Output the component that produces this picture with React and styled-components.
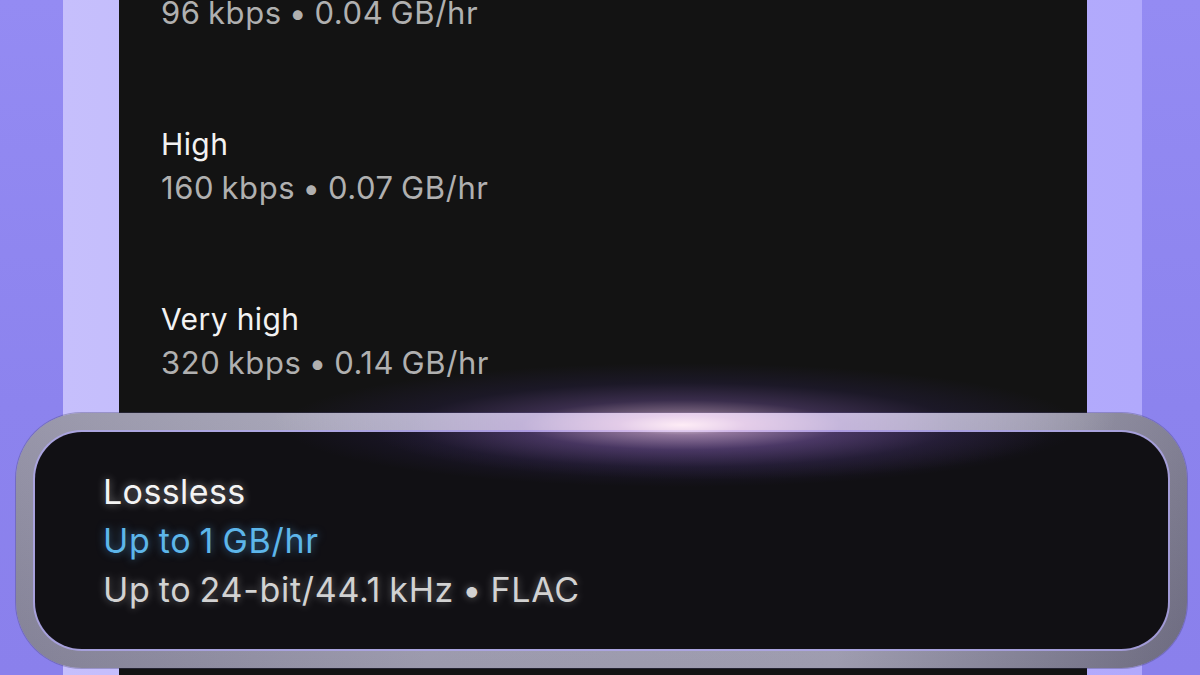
import React from "react";
import styled, { createGlobalStyle } from "styled-components";

// first tier is scrolled past; only its detail line peeks in at the top
const tiers = [
  { name: "Normal", detail: "96 kbps • 0.04 GB/hr", hidden: true },
  { name: "High", detail: "160 kbps • 0.07 GB/hr" },
  { name: "Very high", detail: "320 kbps • 0.14 GB/hr" },
];

export default function App() {
  return (
    <Page>
      <GlobalStyle />
      <Frame>
        <Screen>
          <List>
            {tiers.map((t) => (
              <Item key={t.name}>
                {t.hidden ? <Spacer /> : <Title>{t.name}</Title>}
                <Detail>{t.detail}</Detail>
              </Item>
            ))}
          </List>
          <Card>
            <Glow />
            <CardInner>
              <CardTitle>Lossless</CardTitle>
              <CardLine $accent>Up to 1 GB/hr</CardLine>
              <CardLine>Up to 24-bit/44.1 kHz • FLAC</CardLine>
            </CardInner>
          </Card>
        </Screen>
      </Frame>
    </Page>
  );
}

const GlobalStyle = createGlobalStyle`
  html, body {
    margin: 0;
    padding: 0;
    background: #8d84ef;
  }
  * {
    box-sizing: border-box;
  }
`;

const Page = styled.div`
  width: 1200px;
  height: 675px;
  overflow: hidden;
  padding: 0 58px 0 63px;
  background: linear-gradient(180deg, #948bf3 0%, #8c83ee 60%, #8a80ec 100%);
  font-family: Inter, "Open Sans", sans-serif;
`;

const Frame = styled.div`
  height: 100%;
  padding: 0 55px 0 56px;
  background: linear-gradient(90deg, #c6bffc 0%, #b9b1fc 50%, #b1a9fc 100%);
`;

const Screen = styled.div`
  height: 100%;
  background: #131313;
  display: flex;
  flex-direction: column;
`;

const List = styled.div`
  margin-top: -52px;
  padding-left: 42px;
  display: flex;
  flex-direction: column;
  gap: 89px;
`;

const Item = styled.div`
  display: flex;
  flex-direction: column;
`;

const Spacer = styled.div`
  height: 43px;
`;

const Title = styled.div`
  font-size: 30px;
  line-height: 43px;
  color: #f2f2f2;
  letter-spacing: 0.4px;
`;

const Detail = styled.div`
  font-size: 31px;
  line-height: 43px;
  color: #b0b0b0;
  letter-spacing: 0.6px;
  word-spacing: -2px;
`;

const Card = styled.div`
  position: relative;
  margin: 29px -100px 0 -103px;
  height: 255px;
  padding: 19px;
  border-radius: 66px;
  background:
    radial-gradient(ellipse 36% 45% at 58% 0%, rgba(255, 252, 255, 0.95), rgba(255, 255, 255, 0) 100%),
    linear-gradient(180deg, rgba(255, 255, 255, 0.12), rgba(0, 0, 0, 0.05)),
    linear-gradient(90deg, #8a889e 0%, #a4a2b6 35%, #a6a4b8 70%, #727086 100%);
  box-shadow: 0 0 0 1px rgba(70, 66, 110, 0.35);
`;

const Glow = styled.span`
  position: absolute;
  left: 50%;
  top: -50px;
  width: 800px;
  height: 124px;
  transform: translateX(-40%);
  background: radial-gradient(
    ellipse closest-side at center,
    rgba(255, 236, 246, 0.9) 0%,
    rgba(220, 180, 226, 0.55) 16%,
    rgba(140, 100, 196, 0.32) 40%,
    rgba(80, 56, 160, 0.14) 68%,
    rgba(40, 30, 100, 0) 100%
  );
  pointer-events: none;
  z-index: 1;
`;

const CardInner = styled.div`
  position: relative;
  height: 100%;
  border-radius: 47px;
  padding: 35px 0 0 68px;
  background:
    radial-gradient(ellipse 30% 22% at 60% 0%, rgba(150, 110, 200, 0.3), rgba(0, 0, 0, 0)),
    #111014;
  box-shadow: 0 0 0 2px rgba(176, 168, 240, 0.75);
  display: flex;
  flex-direction: column;
`;

const CardTitle = styled.div`
  font-size: 34px;
  line-height: 49px;
  color: #f4f4f4;
  letter-spacing: 0.4px;
  text-shadow: 0 0 8px rgba(255, 255, 255, 0.45);
  z-index: 2;
`;

const CardLine = styled.div`
  font-size: 34px;
  line-height: 49px;
  letter-spacing: 0.7px;
  word-spacing: -2px;
  color: ${(p) => (p.$accent ? "#5db6ea" : "#d2d2d2")};
  text-shadow: 0 0 8px
    ${(p) => (p.$accent ? "rgba(80, 170, 240, 0.55)" : "rgba(255, 255, 255, 0.35)")};
`;
